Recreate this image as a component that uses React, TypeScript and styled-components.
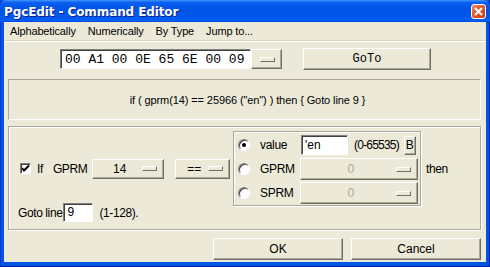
import styled, { createGlobalStyle } from "styled-components";

const GlobalStyle = createGlobalStyle`
  html, body {
    margin: 0;
    padding: 0;
    background: #ffffff;
  }
  * {
    box-sizing: border-box;
  }
`;

const menuItems = ["Alphabetically", "Numerically", "By Type", "Jump to..."];

const App = () => {
  return (
    <>
      <GlobalStyle />
      <Window>
        <TitleBar>
          <TitleText>PgcEdit - Command Editor</TitleText>
          <CloseButton>
            <svg width="9" height="9" viewBox="0 0 9 9">
              <path d="M1 1 L8 8 M8 1 L1 8" stroke="#fff" strokeWidth="2" />
            </svg>
          </CloseButton>
        </TitleBar>
        <Client>
          <MenuBar>
            {menuItems.map((item) => (
              <MenuItem key={item}>{item}</MenuItem>
            ))}
          </MenuBar>

          <HexRow>
            <HexField>00 A1 00 0E 65 6E 00 09</HexField>
            <MenuButton $width={31}>
              <Indicator />
            </MenuButton>
            <PushButton $width={128} $mono>
              GoTo
            </PushButton>
          </HexRow>

          <Preview>if ( gprm(14) == 25966 ("en") ) then {"{"} Goto line 9 {"}"}</Preview>

          <GroupFrame>
            <ConditionRow>
              <LeftCluster>
                <CheckBox>
                  <svg width="9" height="9" viewBox="0 0 9 9">
                    <path d="M1 4 L3 6.5 L8 1.5" stroke="#000" strokeWidth="2" fill="none" />
                  </svg>
                </CheckBox>
                <Label $ml={6}>If</Label>
                <Label $ml={10}>GPRM</Label>
                <MenuButton $width={72} $ml={5}>
                  <ButtonText>14</ButtonText>
                  <Indicator />
                </MenuButton>
                <MenuButton $width={55} $ml={11}>
                  <ButtonText>==</ButtonText>
                  <Indicator />
                </MenuButton>
              </LeftCluster>

              <InnerFrame>
                <RadioRow>
                  <Radio $checked />
                  <RadioLabel>value</RadioLabel>
                  <ValueField>'en</ValueField>
                  <Label $ml={6} $tight>(0-65535)</Label>
                  <SmallButton>B</SmallButton>
                </RadioRow>
                <RadioRow>
                  <Radio />
                  <RadioLabel>GPRM</RadioLabel>
                  <MenuButton $width={119} $disabled>
                    <ButtonText $disabled>0</ButtonText>
                    <Indicator />
                  </MenuButton>
                </RadioRow>
                <RadioRow>
                  <Radio />
                  <RadioLabel>SPRM</RadioLabel>
                  <MenuButton $width={119} $disabled>
                    <ButtonText $disabled>0</ButtonText>
                    <Indicator />
                  </MenuButton>
                </RadioRow>
              </InnerFrame>

              <Label $ml={5}>then</Label>
            </ConditionRow>

            <GotoRow>
              <Label>Goto line</Label>
              <LineField>9</LineField>
              <Label $ml={6}>(1-128).</Label>
            </GotoRow>
          </GroupFrame>

          <ButtonRow>
            <PushButton $width={130}>OK</PushButton>
            <PushButton $width={130}>Cancel</PushButton>
          </ButtonRow>
        </Client>
      </Window>
    </>
  );
};

export default App;

const Window = styled.div`
  width: 490px;
  height: 267px;
  display: flex;
  flex-direction: column;
  background: #0055e5;
  border-left: 1px solid #0831d9;
  border-right: 1px solid #001ea0;
  border-bottom: 1px solid #001ea0;
  font-family: "Liberation Sans", Arial, sans-serif;
  font-size: 11px;
  color: #000;
`;

const TitleBar = styled.div`
  height: 22px;
  flex: none;
  display: flex;
  align-items: center;
  justify-content: space-between;
  padding: 0 4px 0 4px;
  margin: 0 -1px;
  background: linear-gradient(
    #3d95ff 0%,
    #0a5ef0 12%,
    #0054e3 45%,
    #0058ee 80%,
    #0062f8 92%,
    #0046d8 100%
  );
  border-radius: 6px 6px 0 0;
`;

const TitleText = styled.span`
  color: #ffffff;
  font-family: "DejaVu Sans", Verdana, sans-serif;
  font-weight: bold;
  font-size: 12px;
  letter-spacing: -0.1px;
  text-shadow: 1px 1px 0 #0a1e8c;
  padding-top: 1px;
`;

const CloseButton = styled.div`
  width: 15px;
  height: 15px;
  display: flex;
  align-items: center;
  justify-content: center;
  border: 1px solid #ffffff;
  border-radius: 3px;
  background: linear-gradient(135deg, #f08a5c 0%, #e0532a 50%, #c73b12 100%);
`;

const Client = styled.div`
  flex: 1;
  display: flex;
  flex-direction: column;
  margin: 0 3px 4px 3px;
  background: #ece9d8;
`;

const MenuBar = styled.div`
  height: 20px;
  display: flex;
  align-items: center;
  border-bottom: 1px solid #ffffff;
  box-shadow: 0 -1px 0 #d8d2bd inset;
  padding-bottom: 1px;
`;

const MenuItem = styled.span`
  padding: 0 6px;
  line-height: 18px;
  letter-spacing: -0.15px;
`;

const HexRow = styled.div`
  display: flex;
  align-items: center;
  height: 22px;
  margin-top: 6px;
  padding-left: 56px;
`;

const sunken = `
  border-top: 1px solid #808080;
  border-left: 1px solid #808080;
  border-right: 1px solid #ffffff;
  border-bottom: 1px solid #ffffff;
  box-shadow: inset 1px 1px 0 #404040;
  background: #ffffff;
`;

const HexField = styled.div`
  ${sunken}
  width: 191px;
  height: 20px;
  padding: 1px 0 0 4px;
  font-family: "Liberation Mono", "Courier New", monospace;
  font-size: 13px;
  line-height: 17px;
  white-space: nowrap;
  overflow: hidden;
`;

const raised = `
  border-top: 1px solid #ffffff;
  border-left: 1px solid #ffffff;
  border-right: 1px solid #716f64;
  border-bottom: 1px solid #716f64;
  box-shadow: inset -1px -1px 0 #aca899;
  background: #ece9d8;
`;

const MenuButton = styled.div<{ $width: number; $ml?: number; $disabled?: boolean }>`
  ${raised}
  width: ${(p) => p.$width}px;
  height: ${(p) => (p.$disabled ? 22 : 20)}px;
  margin-left: ${(p) => p.$ml ?? 0}px;
  display: flex;
  align-items: center;
  justify-content: flex-end;
  padding-right: 6px;
`;

const ButtonText = styled.span<{ $disabled?: boolean }>`
  flex: 1;
  text-align: center;
  font-size: 12px;
  color: ${(p) => (p.$disabled ? "#aca899" : "#000")};
  padding-left: 4px;
`;

const Indicator = styled.span`
  width: 15px;
  height: 5px;
  flex: none;
  ${raised}
  box-shadow: none;
`;

const PushButton = styled.div<{ $width: number; $mono?: boolean }>`
  ${raised}
  width: ${(p) => p.$width}px;
  height: 22px;
  display: flex;
  align-items: center;
  justify-content: center;
  font-family: ${(p) =>
    p.$mono
      ? `"Liberation Mono", "Courier New", monospace`
      : `"Liberation Sans", Arial, sans-serif`};
  font-size: 12px;
  margin-left: ${(p) => (p.$mono ? 21 : 0)}px;
`;

const Preview = styled.div`
  height: 41px;
  margin: 9px 5px 0 4px;
  display: flex;
  align-items: center;
  justify-content: center;
  border-top: 1px solid #aca899;
  border-left: 1px solid #aca899;
  border-right: 1px solid #ffffff;
  border-bottom: 1px solid #ffffff;
  font-size: 11px;
  letter-spacing: -0.1px;
  padding-left: 6px;
`;

const GroupFrame = styled.div`
  height: 104px;
  margin: 6px 5px 0 4px;
  border: 1px solid #aca899;
  box-shadow: inset 1px 1px 0 #ffffff, 1px 1px 0 #ffffff;
  display: flex;
  flex-direction: column;
  padding: 4px 0 0 0;
`;

const ConditionRow = styled.div`
  display: flex;
  align-items: center;
`;

const LeftCluster = styled.div`
  display: flex;
  align-items: center;
  padding-left: 11px;
  width: 224px;
`;

const CheckBox = styled.span`
  width: 11px;
  height: 11px;
  display: flex;
  align-items: center;
  justify-content: center;
  border: 1px solid #ffffff;
  border-top-color: #808080;
  border-left-color: #808080;
  box-shadow: inset 1px 1px 0 #404040;
  background: #ffffff;
  flex: none;
`;

const Label = styled.span<{ $ml?: number; $tight?: boolean }>`
  margin-left: ${(p) => p.$ml ?? 0}px;
  font-size: 12px;
  letter-spacing: ${(p) => (p.$tight ? -0.8 : -0.4)}px;
  white-space: nowrap;
`;

const InnerFrame = styled.div`
  width: 188px;
  height: 75px;
  border: 1px solid #aca899;
  box-shadow: inset 1px 1px 0 #ffffff, 1px 1px 0 #ffffff;
  display: flex;
  flex-direction: column;
  justify-content: space-between;
  padding: 2px 2px 1px 3px;
`;

const RadioRow = styled.div`
  display: flex;
  align-items: center;
  height: 22px;
`;

const Radio = styled.span<{ $checked?: boolean }>`
  width: 12px;
  height: 12px;
  border-radius: 50%;
  flex: none;
  background: #ffffff;
  border: 1px solid #808080;
  border-right-color: #ffffff;
  border-bottom-color: #ffffff;
  box-shadow: inset 1px 1px 0 #404040;
  display: flex;
  align-items: center;
  justify-content: center;
  margin-left: 1px;

  &::after {
    content: "";
    width: 4px;
    height: 4px;
    border-radius: 50%;
    background: ${(p) => (p.$checked ? "#000" : "transparent")};
  }
`;

const RadioLabel = styled.span`
  width: 51px;
  padding-left: 10px;
  font-size: 12px;
  letter-spacing: -0.3px;
`;

const ValueField = styled.div`
  ${sunken}
  width: 47px;
  height: 20px;
  padding: 1px 0 0 3px;
  font-size: 12px;
  line-height: 16px;
`;

const SmallButton = styled.div`
  ${raised}
  width: 12px;
  height: 19px;
  margin-left: 5px;
  display: flex;
  align-items: center;
  justify-content: center;
  font-size: 12px;
`;

const GotoRow = styled.div`
  display: flex;
  align-items: center;
  padding-left: 9px;
  margin-top: -3px;
`;

const LineField = styled.div`
  ${sunken}
  width: 30px;
  height: 19px;
  margin-left: 1px;
  padding: 0 0 0 3px;
  font-size: 12px;
  line-height: 16px;
`;

const ButtonRow = styled.div`
  display: flex;
  justify-content: flex-end;
  gap: 8px;
  margin: 8px 5px 0 0;
`;
